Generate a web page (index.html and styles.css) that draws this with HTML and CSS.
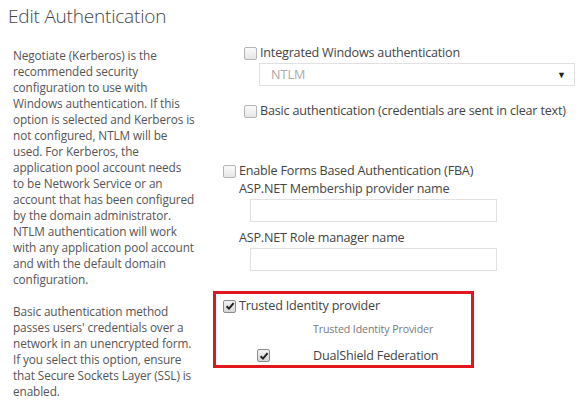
FILE: index.html
```html
<!DOCTYPE html>
<html>
<head>
<meta charset="utf-8">
<link rel="stylesheet" href="styles.css">
</head>
<body>
<h1 class="title">Edit Authentication</h1>
<div class="layout">
  <div class="help">
    <p>Negotiate (Kerberos) is the<br>recommended security<br>configuration to use with<br>Windows authentication. If this<br>option is selected and Kerberos is<br>not configured, NTLM will be<br>used. For Kerberos, the<br>application pool account needs<br>to be Network Service or an<br>account that has been configured<br>by the domain administrator.<br>NTLM authentication will work<br>with any application pool account<br>and with the default domain<br>configuration.</p>
    <p>Basic authentication method<br>passes users' credentials over a<br>network in an unencrypted form.<br>If you select this option, ensure<br>that Secure Sockets Layer (SSL) is<br>enabled.</p>
  </div>
  <div class="options">
    <div class="group-win">
      <div class="check-row"><span class="cb"></span><span class="label">Integrated Windows authentication</span></div>
      <div class="select"><span class="select-text">NTLM</span><span class="arrow">▼</span></div>
      <div class="check-row basic"><span class="cb"></span><span class="label">Basic authentication (credentials are sent in clear text)</span></div>
    </div>
    <div class="group-fba">
      <div class="check-row"><span class="cb"></span><span class="label">Enable Forms Based Authentication (FBA)</span></div>
      <div class="field-label">ASP.NET Membership provider name</div>
      <div class="textbox"></div>
      <div class="field-label second">ASP.NET Role manager name</div>
      <div class="textbox"></div>
    </div>
    <div class="trusted">
      <div class="check-row"><span class="cb checked"><svg viewBox="0 0 12 12" width="12" height="12"><path d="M2.6 6.2 L5 8.6 L9.6 3.2" fill="none" stroke="#222" stroke-width="2"/></svg></span><span class="label">Trusted Identity provider</span></div>
      <div class="tip-head">Trusted Identity Provider</div>
      <div class="tip-row"><span class="cb checked"><svg viewBox="0 0 12 12" width="12" height="12"><path d="M2.6 6.2 L5 8.6 L9.6 3.2" fill="none" stroke="#222" stroke-width="2"/></svg></span><span class="tip-name">DualShield Federation</span></div>
    </div>
  </div>
</div>
</body>
</html>
```

FILE: styles.css
```css
html, body {
  margin: 0;
  padding: 0;
  background: #fff;
}
body {
  font-family: "Open Sans", "Noto Sans", sans-serif;
  color: #444;
  width: 583px;
  height: 402px;
  overflow: hidden;
}
.title {
  margin: 0;
  padding: 3px 0 0 8px;
  font-size: 19px;
  font-weight: 300;
  color: #444;
  line-height: 26px;
  letter-spacing: -0.2px;
}
.layout {
  display: flex;
  padding-top: 18px;
}
.help {
  width: 187px;
  padding-left: 13px;
  font-size: 11.8px;
  line-height: 16px;
  color: #555;
  letter-spacing: -0.1px;
  white-space: nowrap;
}
.help p {
  margin: 0 0 16px 0;
}
.options {
  padding-left: 13px;
  flex: 1;
}
.cb {
  display: inline-block;
  width: 11px;
  height: 11px;
  border: 1px solid #b4b4b4;
  border-radius: 2px;
  background: linear-gradient(#fbfbfb, #e6e6e6);
  flex: none;
  position: relative;
}
.cb svg {
  position: absolute;
  left: -0.5px;
  top: -0.5px;
}
.cb.checked {
  border-color: #8c8c8c;
  background: linear-gradient(#f2f2f2, #d6d6d6);
}
.check-row {
  display: flex;
  align-items: center;
  gap: 3px;
  font-size: 12.6px;
  line-height: 18px;
  color: #444;
  letter-spacing: -0.2px;
}
.group-win {
  padding-left: 31px;
  margin-top: -3px;
}
.select {
  margin: 1px 8px 0 15px;
  height: 21px;
  border: 1px solid #e1e1e1;
  display: flex;
  align-items: center;
  justify-content: space-between;
  padding: 0 8px 0 11px;
}
.select-text {
  font-size: 12.6px;
  color: #aaa;
}
.arrow {
  font-size: 9px;
  color: #222;
}
.basic {
  margin-top: 16px;
}
.group-fba {
  padding: 0 0 0 10px;
  margin-top: 42px;
}
.field-label {
  padding-left: 16px;
  font-size: 12.6px;
  line-height: 18px;
  color: #444;
  letter-spacing: -0.2px;
  margin-top: 0;
}
.field-label.second {
  margin-top: 7px;
}
.textbox {
  margin: 1px 0 0 27px;
  width: 245px;
  height: 21px;
  border: 1px solid #e1e1e1;
}
.trusted {
  margin-top: 20px;
  width: 248px;
  height: 71px;
  border: 3px solid #e3151e;
  padding: 0 0 0 7px;
}
.trusted .check-row {
  margin-top: 3px;
}
.tip-head {
  font-size: 10.6px;
  color: #777;
  padding-left: 90px;
  margin-top: 7px;
  line-height: 14px;
  letter-spacing: -0.1px;
}
.tip-row {
  display: flex;
  align-items: center;
  margin-top: 11px;
  padding-left: 34px;
}
.tip-name {
  margin-left: 43px;
  font-size: 12.6px;
  color: #444;
  letter-spacing: -0.2px;
}
```
